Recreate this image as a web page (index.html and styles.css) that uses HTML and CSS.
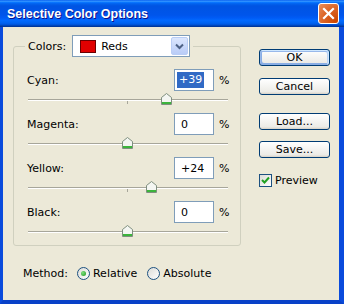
FILE: index.html
```html
<!DOCTYPE html>
<html>
	<head>
		<meta charset="utf-8">
		<title>Selective Color Options</title>
		<link rel="stylesheet" href="styles.css">
	</head>
	<body>
		<div class="window">
			<div class="titlebar">
				<span class="title">Selective Color Options</span>
				<span class="close">
					<svg width="21" height="21" viewBox="0 0 21 21"><path d="M6 6 L15 15 M15 6 L6 15" stroke="#fff" stroke-width="2.2" stroke-linecap="square"/></svg>
				</span>
			</div>
			<div class="frame">
				<div class="main">
					<fieldset class="group">
						<legend class="group-head">
							<span class="colors-label">Colors:</span>
							<div class="combo">
								<span class="swatch"></span>
								<span class="combo-text">Reds</span>
								<span class="combo-btn">
									<svg width="9" height="7" viewBox="0 0 9 7"><path d="M1 1.5 L4.5 5 L8 1.5" fill="none" stroke="#4d6185" stroke-width="2"/></svg>
								</span>
							</div>
						</legend>

						<div class="row">
							<span class="label">Cyan:</span>
							<span class="field"><span class="selected">+39</span></span>
							<span class="pct">%</span>
						</div>
						<div class="slider">
							<div class="track"></div>
							<span class="tick"></span>
							<span class="thumb" style="left: 134px"><svg width="11" height="12" viewBox="0 0 11 12"><path d="M0.5 11.5 V4.5 L5.5 0.5 L10.5 4.5 V11.5 Z" fill="#f4f6f2" stroke="#7f8f7f"/><rect x="1" y="9" width="9" height="2" fill="#3cb43c"/></svg></span>
						</div>

						<div class="row">
							<span class="label">Magenta:</span>
							<span class="field">0</span>
							<span class="pct">%</span>
						</div>
						<div class="slider">
							<div class="track"></div>
							<span class="tick"></span>
							<span class="thumb" style="left: 95px"><svg width="11" height="12" viewBox="0 0 11 12"><path d="M0.5 11.5 V4.5 L5.5 0.5 L10.5 4.5 V11.5 Z" fill="#f4f6f2" stroke="#7f8f7f"/><rect x="1" y="9" width="9" height="2" fill="#3cb43c"/></svg></span>
						</div>

						<div class="row">
							<span class="label">Yellow:</span>
							<span class="field">+24</span>
							<span class="pct">%</span>
						</div>
						<div class="slider">
							<div class="track"></div>
							<span class="tick"></span>
							<span class="thumb" style="left: 119px"><svg width="11" height="12" viewBox="0 0 11 12"><path d="M0.5 11.5 V4.5 L5.5 0.5 L10.5 4.5 V11.5 Z" fill="#f4f6f2" stroke="#7f8f7f"/><rect x="1" y="9" width="9" height="2" fill="#3cb43c"/></svg></span>
						</div>

						<div class="row">
							<span class="label">Black:</span>
							<span class="field">0</span>
							<span class="pct">%</span>
						</div>
						<div class="slider">
							<div class="track"></div>
							<span class="tick"></span>
							<span class="thumb" style="left: 95px"><svg width="11" height="12" viewBox="0 0 11 12"><path d="M0.5 11.5 V4.5 L5.5 0.5 L10.5 4.5 V11.5 Z" fill="#f4f6f2" stroke="#7f8f7f"/><rect x="1" y="9" width="9" height="2" fill="#3cb43c"/></svg></span>
						</div>
					</fieldset>

					<div class="buttons">
						<div class="button default">OK</div>
						<div class="button cancel">Cancel</div>
						<div class="button load">Load...</div>
						<div class="button save">Save...</div>
						<div class="check-row">
							<span class="checkbox">
								<svg width="11" height="11" viewBox="0 0 11 11"><path d="M2 5 L4.5 7.5 L9 2.5" fill="none" stroke="#21a121" stroke-width="2"/></svg>
							</span>
							<span>Preview</span>
						</div>
					</div>
				</div>

				<div class="method">
					<span class="method-label">Method:</span>
					<span class="radio on"></span>
					<span class="opt">Relative</span>
					<span class="radio"></span>
					<span>Absolute</span>
				</div>
			</div>
		</div>
	</body>
</html>
```

FILE: styles.css
```css
body {margin: 0; padding: 0; overflow: hidden; font-family: "DejaVu Sans", sans-serif; font-size: 11px; color: #000;}

.window {display: flex; flex-direction: column; width: 344px; height: 304px; background-color: #ece9d8;}

.titlebar {display: flex; align-items: center; height: 27px; padding-left: 7px; background: linear-gradient(180deg, #0058ee 0%, #3593ff 4%, #288eff 6%, #127dff 8%, #036ffc 10%, #0262ee 14%, #0057e5 20%, #0054e3 24%, #0055eb 56%, #005bf5 66%, #026afe 76%, #0062ef 86%, #0052d6 92%, #0040ab 96%, #003092 100%);}
.title {flex: 1; color: #fff; font-family: "Liberation Sans", sans-serif; font-weight: bold; font-size: 12.5px; text-shadow: 1px 1px #0f1089;}
.close {display: flex; width: 21px; height: 21px; margin-right: 5px; box-sizing: border-box; border: 1px solid #fff; border-radius: 3px; background: radial-gradient(circle at 90% 90%, #cc4600 0%, #dc6527 55%, #e8905e 100%);}
.close svg {margin: -1px;}

.frame {flex: 1; display: flex; flex-direction: column; border-left: 3px solid #0a4bdc; border-right: 5px solid #0a4bdc; border-bottom: 4px solid #0841c8;}

.main {display: flex; align-items: flex-start; padding-left: 10px;}

.group {margin: 8px 0 0 0; padding: 12px 12px 0 13px; width: 228px; box-sizing: border-box; min-inline-size: auto; border: 1px solid #d0d0bf; border-radius: 3px;}
.group-head {display: flex; align-items: center; margin-left: -2px; padding: 0 3px;}
.colors-label {margin-right: 6px;}

.combo {display: flex; align-items: center; width: 118px; height: 22px; box-sizing: border-box; border: 1px solid #7f9db9; background-color: #fff;}
.swatch {width: 16px; height: 13px; margin-left: 7px; box-sizing: border-box; border: 1px solid #6a0000; background-color: #e00000;}
.combo-text {flex: 1; margin-left: 5px;}
.combo-btn {display: flex; align-items: center; justify-content: center; width: 17px; height: 18px; margin-right: 1px; box-sizing: border-box; border: 1px solid #b9cdf5; border-radius: 2px; background: linear-gradient(180deg, #dbe6fd, #b9ccf7);}

.row {display: flex; align-items: center; height: 22px;}
.label {flex: 1;}
.field {display: flex; align-items: center; width: 40px; height: 22px; box-sizing: border-box; padding-left: 6px; border: 1px solid #7f9db9; background-color: #fff;}
.selected {margin-left: -4px; padding: 1px 2px 2px 2px; background-color: #316ac5; color: #fff;}
.pct {margin-left: 5px; width: 9px;}

.slider {position: relative; height: 22px; padding-top: 8px; box-sizing: border-box;}
.track {margin-left: 1px; border-top: 1px solid #a7a69a; border-bottom: 1px solid #fff;}
.tick {position: absolute; left: 100px; top: 10px; width: 1px; height: 3px; background-color: #a7a69a;}
.thumb {position: absolute; top: 2px; display: block; width: 11px; height: 12px;}
.thumb svg {display: block;}

.buttons {display: flex; flex-direction: column; width: 71px; margin: 22px 0 0 18px;}
.button {display: flex; align-items: center; justify-content: center; height: 17px; box-sizing: border-box; border: 1px solid #003c74; border-radius: 3px; background: linear-gradient(180deg, #fff, #ecebe6 86%, #d6d0c5);}
.button.default {box-shadow: inset -1px 1px #cee7ff, inset 1px 2px #98b8ea, inset -2px 2px #bcd4f6, inset 1px -1px #89ade4, inset 2px -2px #89ade4;}
.cancel {margin-top: 12px;}
.load {margin-top: 18px;}
.save {margin-top: 11px;}

.check-row {display: flex; align-items: center; margin-top: 16px;}
.checkbox {display: flex; align-items: center; justify-content: center; width: 13px; height: 13px; margin-right: 3px; box-sizing: border-box; border: 1px solid #1c5180; background: linear-gradient(135deg, #dcdcd7, #fff);}

.method {display: flex; align-items: center; height: 14px; margin-top: 20px; padding-left: 20px;}
.method-label {margin-right: 9px;}
.radio {width: 13px; height: 13px; margin-right: 3px; box-sizing: border-box; border: 1px solid #1c5180; border-radius: 50%; background: linear-gradient(135deg, #dcdcd7, #fff); display: flex; align-items: center; justify-content: center;}
.radio.on::after {content: ""; width: 5px; height: 5px; border-radius: 50%; background: radial-gradient(circle at 35% 35%, #7de07d, #1f961f);}
.opt {margin-right: 10px;}
```
